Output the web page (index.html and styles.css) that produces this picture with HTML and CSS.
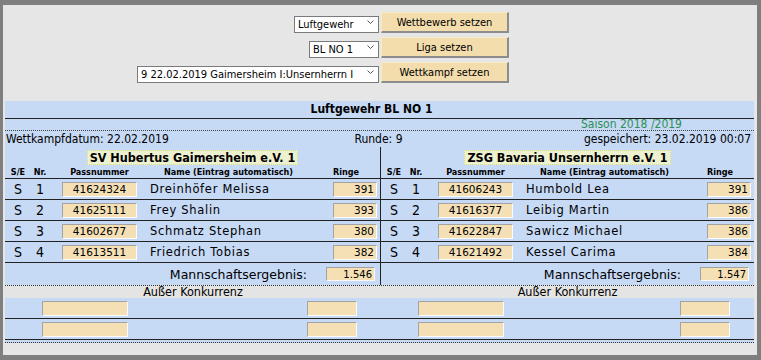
FILE: index.html
```html
<!DOCTYPE html>
<html lang="de">

<head>
  <meta charset="UTF-8" />
  <title>Wettkampf Ergebnis</title>
  <link rel="stylesheet" href="styles.css">
</head>

<body>
  <div class="page">

    <!-- Auswahl Wettbewerb / Liga / Wettkampf -->
    <div class="controls">
      <div class="ctlLeft">
        <span class="selectWrap">
          <select class="sel"><option>Luftgewehr</option></select>
          <svg class="chev" viewBox="0 0 7 4"><path d="M0.5 0.5 L3.5 3.5 L6.5 0.5" /></svg>
        </span>
      </div>
      <div class="ctlRight"><button class="btnSet">Wettbewerb setzen</button></div>

      <div class="ctlLeft">
        <span class="selectWrap">
          <select class="sel"><option>BL NO 1</option></select>
          <svg class="chev" viewBox="0 0 7 4"><path d="M0.5 0.5 L3.5 3.5 L6.5 0.5" /></svg>
        </span>
      </div>
      <div class="ctlRight"><button class="btnSet">Liga setzen</button></div>

      <div class="ctlLeft">
        <span class="selectWrap">
          <select class="sel"><option>9 22.02.2019 Gaimersheim I:Unsernherrn I</option></select>
          <svg class="chev" viewBox="0 0 7 4"><path d="M0.5 0.5 L3.5 3.5 L6.5 0.5" /></svg>
        </span>
      </div>
      <div class="ctlRight"><button class="btnSet">Wettkampf setzen</button></div>
    </div>

    <!-- Ergebnis -->
    <div class="result">
      <div class="title">Luftgewehr BL NO 1</div>
      <div class="season">Saison 2018 /2019</div>
      <div class="meta">
        <span class="metaLeft">Wettkampfdatum: 22.02.2019</span>
        <span class="metaMid">Runde: 9</span>
        <span class="metaRight">gespeichert: 23.02.2019 00:07</span>
      </div>

      <div class="teams">
        <!-- Heim -->
        <div class="team">
          <div class="teamName"><span>SV Hubertus Gaimersheim e.V. 1</span></div>
          <div class="row head">
            <span class="hSe">S/E</span><span class="hNr">Nr.</span><span class="hPass">Passnummer</span>
            <span class="hName">Name (Eintrag automatisch)</span><span class="hRinge">Ringe</span>
          </div>
          <div class="row shooter">
            <span class="se">S</span><span class="nr">1</span><span class="box pass">41624324</span>
            <span class="name">Dreinhöfer Melissa</span><span class="box ringe">391</span>
          </div>
          <div class="row shooter">
            <span class="se">S</span><span class="nr">2</span><span class="box pass">41625111</span>
            <span class="name">Frey Shalin</span><span class="box ringe">393</span>
          </div>
          <div class="row shooter">
            <span class="se">S</span><span class="nr">3</span><span class="box pass">41602677</span>
            <span class="name">Schmatz Stephan</span><span class="box ringe">380</span>
          </div>
          <div class="row shooter">
            <span class="se">S</span><span class="nr">4</span><span class="box pass">41613511</span>
            <span class="name">Friedrich Tobias</span><span class="box ringe">382</span>
          </div>
          <div class="total">
            <span>Mannschaftsergebnis:</span><span class="box sum">1.546</span>
          </div>
        </div>

        <!-- Gast -->
        <div class="team">
          <div class="teamName"><span>ZSG Bavaria Unsernherrn e.V. 1</span></div>
          <div class="row head">
            <span class="hSe">S/E</span><span class="hNr">Nr.</span><span class="hPass">Passnummer</span>
            <span class="hName">Name (Eintrag automatisch)</span><span class="hRinge">Ringe</span>
          </div>
          <div class="row shooter">
            <span class="se">S</span><span class="nr">1</span><span class="box pass">41606243</span>
            <span class="name">Humbold Lea</span><span class="box ringe">391</span>
          </div>
          <div class="row shooter">
            <span class="se">S</span><span class="nr">2</span><span class="box pass">41616377</span>
            <span class="name">Leibig Martin</span><span class="box ringe">386</span>
          </div>
          <div class="row shooter">
            <span class="se">S</span><span class="nr">3</span><span class="box pass">41622847</span>
            <span class="name">Sawicz Michael</span><span class="box ringe">386</span>
          </div>
          <div class="row shooter">
            <span class="se">S</span><span class="nr">4</span><span class="box pass">41621492</span>
            <span class="name">Kessel Carima</span><span class="box ringe">384</span>
          </div>
          <div class="total">
            <span>Mannschaftsergebnis:</span><span class="box sum">1.547</span>
          </div>
        </div>
      </div>

      <!-- Ausser Konkurrenz -->
      <div class="extraHead">
        <span>Außer Konkurrenz</span>
        <span>Außer Konkurrenz</span>
      </div>
      <div class="extraRow">
        <div class="half"><span></span><span class="box"></span><span></span><span class="box"></span></div>
        <div class="half"><span></span><span class="box"></span><span></span><span class="box"></span></div>
      </div>
      <div class="extraRow">
        <div class="half"><span></span><span class="box"></span><span></span><span class="box"></span></div>
        <div class="half"><span></span><span class="box"></span><span></span><span class="box"></span></div>
      </div>
    </div>

  </div>
</body>

</html>
```

FILE: styles.css
```css
body {
  margin: 0;
  font-family: "DejaVu Sans Condensed", "DejaVu Sans", sans-serif;
  color: #000;
}

.page {
  height: 360px;
  box-sizing: border-box;
  border-style: solid;
  border-color: #7f7f7f;
  border-width: 5px 4px 5px 3px;
  background-color: #e6e6e6;
}

/* ---------- controls ---------- */

.controls {
  display: grid;
  grid-template-columns: 1fr 1fr;
  column-gap: 2px;
  row-gap: 4px;
  padding-top: 7px;
}

.ctlLeft {
  display: flex;
  justify-content: flex-end;
  align-items: flex-start;
}

.ctlRight {
  display: flex;
  justify-content: flex-start;
}

.selectWrap {
  position: relative;
  display: inline-block;
  margin-top: 1px;
}

.sel {
  -webkit-appearance: none;
  appearance: none;
  box-sizing: border-box;
  height: 17px;
  padding: 0 24px 0 3px;
  border: 1px solid #7a7a7a;
  border-radius: 0;
  background-color: #fff;
  color: #000;
  font-family: "DejaVu Sans Condensed", "DejaVu Sans", sans-serif;
  font-size: 11px;
}

.chev {
  position: absolute;
  right: 5px;
  top: 7px;
  width: 7px;
  height: 4px;
  fill: none;
  stroke: #555;
  stroke-width: 1;
  pointer-events: none;
}

.btnSet {
  width: 128px;
  height: 21px;
  padding: 0;
  background-color: #f3ddac;
  border-style: solid;
  border-width: 1px 2px 2px 1px;
  border-color: #f8ebc8 #8c8c8c #8c8c8c #f8ebc8;
  color: #000;
  font-family: "DejaVu Sans Condensed", "DejaVu Sans", sans-serif;
  font-size: 11px;
}

/* ---------- result table ---------- */

.result {
  margin: 18px 3px 0 2px;
  padding-bottom: 2px;
  background-color: #c6d9f5;
  border-bottom: 1px dotted #333;
}

.title {
  height: 17px;
  line-height: 17px;
  padding-right: 16px;
  text-align: center;
  font-weight: bold;
  font-size: 12px;
  border-bottom: 1px solid #222;
}

.season {
  height: 11px;
  line-height: 11px;
  padding-right: 72px;
  text-align: right;
  font-size: 12px;
  color: #2f8f55;
  border-bottom: 1px dotted #444;
}

.meta {
  display: grid;
  grid-template-columns: 1fr auto 1fr;
  height: 16px;
  line-height: 16px;
  padding: 0 3px 0 1px;
  font-size: 12px;
}

.metaRight {
  text-align: right;
}

.teams {
  display: grid;
  grid-template-columns: 376px 1fr;
}

.team:first-child {
  border-right: 1px solid #222;
}

.teamName {
  height: 18px;
  display: flex;
  justify-content: center;
  align-items: flex-end;
}

.teamName span {
  padding: 0 2px;
  line-height: 13px;
  font-weight: bold;
  font-size: 12.5px;
  background-color: #eef1cf;
  border: 1px dotted #d2db86;
}

.row {
  display: grid;
  grid-template-columns: 26px 18px 101px 1fr 57px;
  align-items: center;
}

.head {
  height: 13px;
  font-weight: bold;
  font-size: 9px;
}

.hSe,
.hNr,
.hPass {
  text-align: center;
}

.hName {
  padding-left: 14px;
}

.hRinge {
  padding-left: 10px;
}

.shooter {
  height: 20px;
  border-top: 1px solid #222;
}

.se,
.nr {
  text-align: center;
  font-size: 14px;
}

.name {
  font-family: "DejaVu Sans", sans-serif;
  font-size: 11.5px;
  letter-spacing: 0.7px;
}

.box {
  box-sizing: border-box;
  height: 15px;
  line-height: 13px;
  background-color: #f5e0b6;
  border: 1px solid;
  border-color: #a3a3a3 #fbfbfb #fbfbfb #a3a3a3;
  font-family: "DejaVu Sans", sans-serif;
  font-size: 10.5px;
}

.pass {
  width: 75px;
  justify-self: center;
  text-align: center;
}

.ringe {
  width: 44px;
  justify-self: end;
  margin-right: 3px;
  padding-right: 2px;
  text-align: right;
}

.total {
  height: 22px;
  border-top: 1px solid #222;
  display: flex;
  justify-content: flex-end;
  align-items: center;
  gap: 19px;
  padding-right: 5px;
  font-family: "DejaVu Sans", sans-serif;
  font-size: 12.5px;
}

.sum {
  width: 49px;
  height: 14px;
  padding-right: 2px;
  text-align: right;
  font-size: 10px;
}

/* ---------- ausser konkurrenz ---------- */

.extraHead {
  display: grid;
  grid-template-columns: 376px 1fr;
  height: 12px;
  line-height: 12px;
  text-align: center;
  font-size: 12.5px;
  background-color: #e4e4e4;
  border-top: 1px dotted #333;
}

.extraRow {
  display: grid;
  grid-template-columns: 376px 1fr;
  height: 20px;
  border-bottom: 1px solid #222;
}

.half {
  display: grid;
  grid-template-columns: 37px 86px 1fr 50px 24px;
  align-items: center;
}
```
